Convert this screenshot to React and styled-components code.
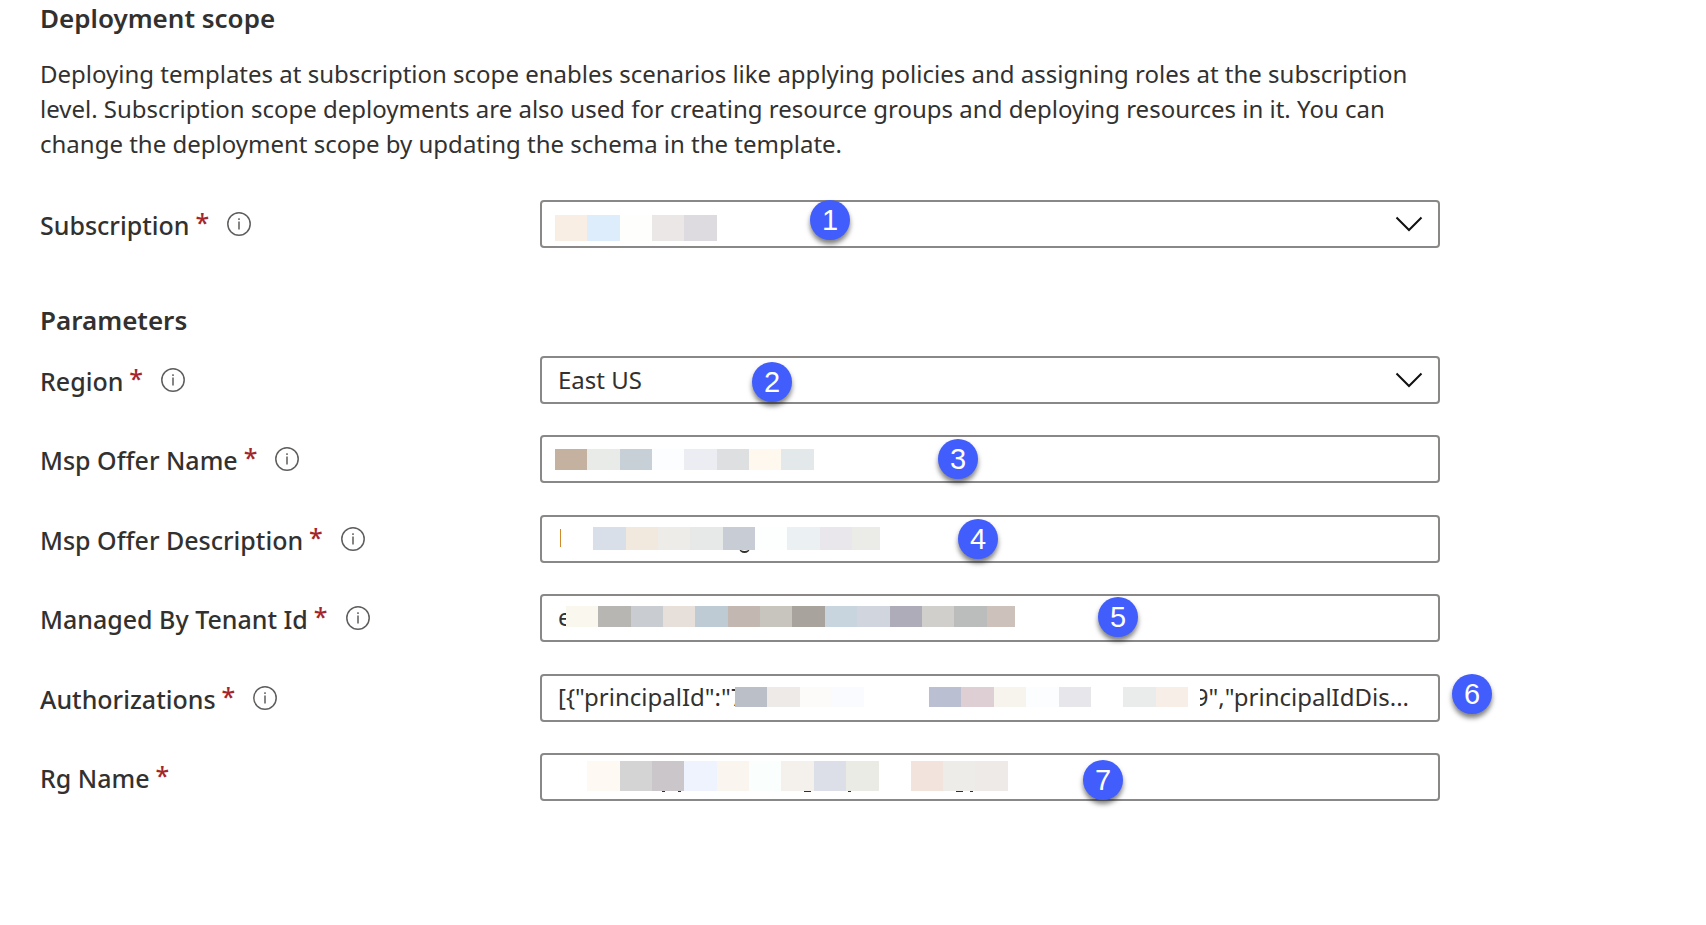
import React from "react";
import styled, { createGlobalStyle } from "styled-components";

const GlobalStyle = createGlobalStyle`
  *, *::before, *::after { box-sizing: border-box; }
  body {
    margin: 0;
    background: #fff;
    color: #323130;
    font-family: "Noto Sans", "Open Sans", sans-serif;
    font-size: 24px;
    line-height: 35px;
  }
`;

const Page = styled.main`
  display: flex;
  flex-direction: column;
  gap: 54px;
  max-width: 1440px;
  padding: 0 0 48px 40px;
`;

const Section = styled.section`
  display: flex;
  flex-direction: column;
  gap: 18px;
`;

const SectionTitle = styled.h2`
  margin: 0;
  font-size: 26px;
  line-height: 36px;
  font-weight: 600;
`;

const Description = styled.p`
  margin: 0;
  padding: 2px 0 21px;
`;

const Fields = styled.div`
  display: flex;
  flex-direction: column;
  gap: 32px;
`;

const FieldPair = styled.div`
  display: flex;
  flex-direction: column;
  gap: 31px;
`;

const FieldRow = styled.div`
  display: grid;
  grid-template-columns: minmax(200px, 500px) minmax(0, 900px);
  align-items: center;
`;

const LabelCell = styled.div`
  display: flex;
  align-items: center;
  gap: 18px;
`;

const Label = styled.label`
  display: flex;
  gap: 6px;
  padding-top: 2px;
  font-size: 25px;
  font-weight: 500;
`;

const Required = styled.span`
  color: #a4262c;
  line-height: 28px;
`;

const InfoButton = styled.button`
  display: flex;
  padding: 0;
  border: 0;
  background: none;
  color: #605e5c;
`;

const Control = styled.div`
  position: relative;
  display: grid;
  grid-template-areas: "box";
  align-items: center;

  & > * { grid-area: box; }
`;

const controlBox = `
  width: 100%;
  height: 48px;
  margin: 0;
  padding: 0 16px 4px;
  border: 2px solid #8a8886;
  border-radius: 4px;
  background: #fff;
  color: inherit;
  font: inherit;
  outline: none;
`;

const TextInput = styled.input`
  ${controlBox}
`;

const Select = styled.select`
  ${controlBox}
  padding-bottom: 2px;
  appearance: none;
`;

const Chevron = styled.svg`
  justify-self: end;
  margin-right: 17px;
  pointer-events: none;
`;

const Tail = styled.span`
  justify-self: end;
  padding: 0 31px 3px 0;
  white-space: nowrap;
  pointer-events: none;
`;

const Mosaic = styled.div`
  position: absolute;
  top: ${(p) => p.$top}px;
  left: ${(p) => p.$left}px;
  display: flex;
  height: ${(p) => p.$height}px;
  pointer-events: none;
`;

const Tile = styled.span`
  width: ${(p) => p.$width}px;
  background: ${(p) => p.$color};
`;

const Mark = styled.span`
  position: absolute;
  top: ${(p) => p.$top}px;
  left: ${(p) => p.$left}px;
  width: ${(p) => p.$width}px;
  height: ${(p) => p.$height}px;
  ${(p) =>
    p.$round
      ? "border-bottom: 2px solid #323130; border-radius: 0 0 6px 6px;"
      : `background: ${p.$color || "#323130"};`}
`;

const Badge = styled.span`
  position: absolute;
  top: ${(p) => p.$top}px;
  left: ${(p) => p.$left}px;
  width: 40px;
  height: 40px;
  border-radius: 50%;
  background: #415dfb;
  box-shadow: 0 4px 5px rgba(0, 0, 0, 0.5);
  color: #fff;
  font-family: "Liberation Sans", sans-serif;
  font-size: 29px;
  line-height: 41px;
  text-align: center;
  pointer-events: none;
`;

const InfoIcon = () => (
  <svg width="24" height="24" viewBox="0 0 24 24" fill="none" aria-hidden="true">
    <circle cx="12" cy="12" r="11.2" stroke="currentColor" strokeWidth="1.5" />
    <path d="M12 9.5v8M12 6.3v1.7" stroke="currentColor" strokeWidth="1.5" />
  </svg>
);

const subscription = {
  id: "subscription", label: "Subscription", kind: "select", value: "", info: true,
  badge: { number: 1, left: 270, top: 0 },
  mosaic: {
    left: 15, top: 15, height: 26,
    tiles: [[32, "#f8eee3"], [33, "#deedfb"], [32, "#fefefc"], [32, "#ebe7e6"], [33, "#dddbdf"]],
  },
};

const parameterPairs = [
  [
    {
      id: "region", label: "Region", kind: "select", value: "East US", info: true,
      badge: { number: 2, left: 212, top: 6 },
    },
    {
      id: "offer-name", label: "Msp Offer Name", value: "", info: true,
      badge: { number: 3, left: 398, top: 4 },
      mosaic: {
        left: 15, top: 14, height: 21,
        tiles: [[32, "#c4b19f"], [33, "#e9ebe9"], [32, "#c8d0d7"], [32, "#fcfdff"], [33, "#ebedf3"], [32, "#dddfe0"], [32, "#fff8ee"], [33, "#e3e8ea"]],
      },
    },
  ],
  [
    {
      id: "offer-description", label: "Msp Offer Description", value: "", info: true,
      badge: { number: 4, left: 418, top: 4 },
      marks: [
        { left: 20, top: 14, width: 1, height: 18, color: "#d08a2c" },
        { left: 199, top: 26, width: 11, height: 12, round: true },
      ],
      mosaic: {
        left: 53, top: 12, height: 23,
        tiles: [[33, "#d8dfe8"], [32, "#f2e9de"], [32, "#eeece8"], [33, "#e6e9e7"], [32, "#c8ccd5"], [32, "#fdffff"], [33, "#ebf0f2"], [32, "#e9e7eb"], [28, "#ebece8"]],
      },
    },
    {
      id: "tenant-id", label: "Managed By Tenant Id", value: "e", info: true,
      badge: { number: 5, left: 558, top: 3 },
      mosaic: {
        left: 26, top: 12, height: 21,
        tiles: [[32, "#faf7ee"], [33, "#b7b6b2"], [32, "#c9cdd1"], [32, "#e7dfd9"], [33, "#bfcbd4"], [32, "#c2b7b1"], [32, "#c8c4be"], [33, "#a8a39c"], [32, "#c8d4de"], [33, "#d0d5de"], [32, "#adacb8"], [32, "#d0cfcb"], [33, "#babdbb"], [28, "#ccc2bb"]],
      },
    },
  ],
  [
    {
      id: "authorizations", label: "Authorizations", value: '[{"principalId":"7', info: true,
      tail: '9","principalIdDis...',
      badge: { number: 6, left: 912, top: 0 },
      mosaic: {
        left: 195, top: 13, height: 20,
        tiles: [[32, "#bbbfc7"], [33, "#eeeae7"], [32, "#fcfbf9"], [32, "#fafbfe"], [65, "#fff"], [32, "#bac0d1"], [33, "#ddcfd3"], [32, "#f7f4ee"], [33, "#fbfdff"], [32, "#e6e6eb"], [32, "#fff"], [33, "#e9ecea"], [32, "#f7efe7"], [12, "#fff"]],
      },
    },
    {
      id: "rg-name", label: "Rg Name", value: "",
      badge: { number: 7, left: 543, top: 7 },
      marks: [
        { left: 122, top: 38, width: 3, height: 1 },
        { left: 138, top: 38, width: 3, height: 1 },
        { left: 264, top: 38, width: 7, height: 1 },
        { left: 308, top: 38, width: 3, height: 1 },
        { left: 416, top: 38, width: 7, height: 1 },
        { left: 430, top: 38, width: 3, height: 1 },
      ],
      mosaic: {
        left: 47, top: 8, height: 30,
        tiles: [[33, "#fefaf3"], [32, "#d4d4d5"], [32, "#cbc6ca"], [33, "#eef3fd"], [32, "#faf5ee"], [32, "#fafffe"], [33, "#f4f1ed"], [32, "#dcdfe8"], [33, "#eaebe5"], [32, "#fff"], [32, "#f2e4dc"], [32, "#edece8"], [33, "#eeeae7"]],
      },
    },
  ],
];

function Field({ id, label, kind, value, info, badge, mosaic, marks = [], tail }) {
  return (
    <FieldRow>
      <LabelCell>
        <Label htmlFor={id}>
          {label}
          <Required>*</Required>
        </Label>
        {info && (
          <InfoButton type="button" aria-label={`About ${label}`}>
            <InfoIcon />
          </InfoButton>
        )}
      </LabelCell>
      <Control>
        {kind === "select" ? (
          <>
            <Select id={id} defaultValue={value}>
              <option value={value}>{value}</option>
            </Select>
            <Chevron width="28" height="16" viewBox="0 0 28 16" fill="none" aria-hidden="true">
              <path d="M1.5 1.5L14 14L26.5 1.5" stroke="#111" strokeWidth="2" />
            </Chevron>
          </>
        ) : (
          <TextInput id={id} type="text" defaultValue={value} />
        )}
        {tail && <Tail>{tail}</Tail>}
        {marks.map((m) => (
          <Mark key={m.left} $left={m.left} $top={m.top} $width={m.width} $height={m.height} $color={m.color} $round={m.round} />
        ))}
        {mosaic && (
          <Mosaic $left={mosaic.left} $top={mosaic.top} $height={mosaic.height}>
            {mosaic.tiles.map(([width, color], i) => (
              <Tile key={i} $width={width} $color={color} />
            ))}
          </Mosaic>
        )}
        <Badge $left={badge.left} $top={badge.top}>{badge.number}</Badge>
      </Control>
    </FieldRow>
  );
}

export default function App() {
  return (
    <>
      <GlobalStyle />
      <Page>
        <Section>
          <SectionTitle>Deployment scope</SectionTitle>
          <Description>
            Deploying templates at subscription scope enables scenarios like applying policies and
            assigning roles at the subscription level. Subscription scope deployments are also used
            for creating resource groups and deploying resources in it. You can change the
            deployment scope by updating the schema in the template.
          </Description>
          <Field {...subscription} />
        </Section>
        <Section>
          <SectionTitle>Parameters</SectionTitle>
          <Fields>
            {parameterPairs.map((pair) => (
              <FieldPair key={pair[0].id}>
                {pair.map((f) => <Field key={f.id} {...f} />)}
              </FieldPair>
            ))}
          </Fields>
        </Section>
      </Page>
    </>
  );
}
